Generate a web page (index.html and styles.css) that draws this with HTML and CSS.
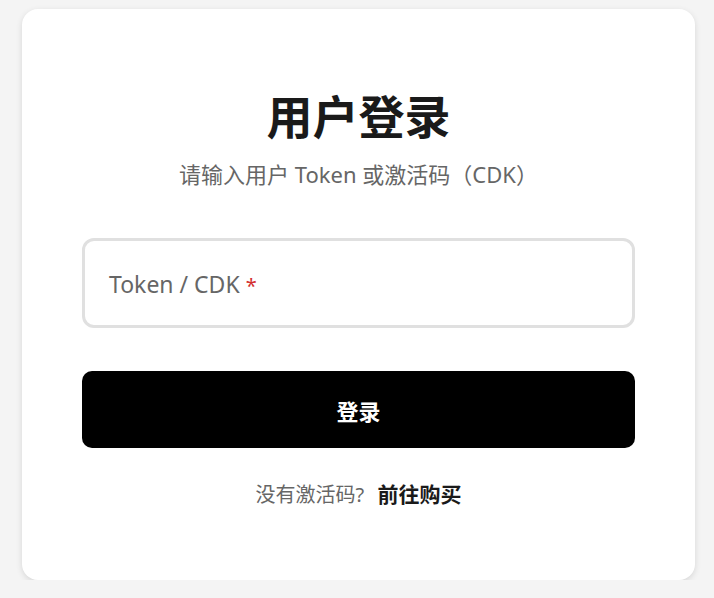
FILE: index.html
```html
<!DOCTYPE html>
<html>
<head>
  <meta charset="utf-8">
  <title>用户登录</title>
  <link rel="stylesheet" href="styles.css">
</head>
<body>
  <div class="card">
    <h1>用户登录</h1>
    <p class="subtitle">请输入用户 Token 或激活码（CDK）</p>

    <form class="login-form" onsubmit="return false">
      <label class="field">
        <input type="text" id="token" placeholder=" ">
        <span class="field-label">Token / CDK <span class="required">*</span></span>
      </label>
      <button type="submit" class="btn-login">登录</button>
    </form>

    <p class="footer">没有激活码? <a href="#">前往购买</a></p>
  </div>
</body>
</html>
```

FILE: styles.css
```css
html, body {
  margin: 0;
  padding: 0;
}

body {
  background: #f4f4f4;
  font-family: "Noto Sans", "Noto Sans CJK SC", sans-serif;
  color: #1a1a1a;
}

.card {
  box-sizing: border-box;
  width: 673px;
  margin: 9px 0 0 22px;
  padding: 80px 60px 71px;
  background: #fff;
  border-radius: 16px;
  box-shadow: 0 2px 6px rgba(0, 0, 0, 0.12);
}

h1 {
  margin: 0;
  text-align: center;
  font-size: 46px;
  line-height: 55px;
  font-weight: 700;
  color: #1a1a1a;
}

.subtitle {
  margin: 14px 0 0;
  text-align: center;
  font-size: 22px;
  line-height: 32px;
  color: #666;
}

.login-form {
  margin-top: 48px;
}

.field {
  position: relative;
  display: block;
}

.field input {
  box-sizing: border-box;
  display: block;
  width: 100%;
  height: 90px;
  padding: 0 25px;
  border: 3px solid #e0e0e0;
  border-radius: 12px;
  font-family: inherit;
  font-size: 23px;
  outline: none;
}

.field-label {
  position: absolute;
  left: 27px;
  top: 31px;
  font-size: 23px;
  line-height: 30px;
  color: #666;
  pointer-events: none;
}

.required {
  color: #d32f2f;
  font-size: 20px;
}

.btn-login {
  display: block;
  width: 100%;
  height: 77px;
  margin-top: 43px;
  border: none;
  border-radius: 10px;
  background: #000;
  color: #fff;
  font-family: inherit;
  font-size: 22px;
  font-weight: 700;
  cursor: pointer;
}

.footer {
  margin: 32px 0 0;
  text-align: center;
  font-size: 20px;
  line-height: 28px;
  color: #666;
}

.footer a {
  margin-left: 8px;
  color: #1a1a1a;
  font-size: 21px;
  font-weight: 700;
  text-decoration: none;
}
```
